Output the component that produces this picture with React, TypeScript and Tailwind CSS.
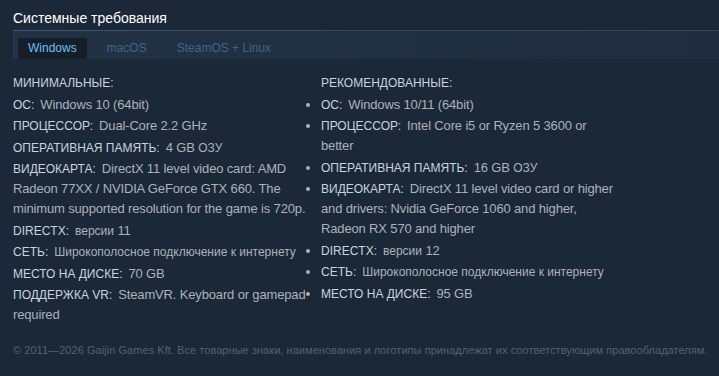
const minReqs: [string, string][] = [
  ["ОС:", "Windows 10 (64bit)"],
  ["Процессор:", "Dual-Core 2.2 GHz"],
  ["Оперативная память:", "4 GB ОЗУ"],
  ["Видеокарта:", "DirectX 11 level video card: AMD Radeon 77XX / NVIDIA GeForce GTX 660. The minimum supported resolution for the game is 720p."],
  ["DirectX:", "версии 11"],
  ["Сеть:", "Широкополосное подключение к интернету"],
  ["Место на диске:", "70 GB"],
  ["Поддержка VR:", "SteamVR. Keyboard or gamepad required"],
];

const recReqs: [string, string][] = [
  ["ОС:", "Windows 10/11 (64bit)"],
  ["Процессор:", "Intel Core i5 or Ryzen 5 3600 or better"],
  ["Оперативная память:", "16 GB ОЗУ"],
  ["Видеокарта:", "DirectX 11 level video card or higher and drivers: Nvidia GeForce 1060 and higher, Radeon RX 570 and higher"],
  ["DirectX:", "версии 12"],
  ["Сеть:", "Широкополосное подключение к интернету"],
  ["Место на диске:", "95 GB"],
];

// cyrillic runs are set a bit smaller, the original font is narrower there
function Mixed({ text }: { text: string }) {
  const parts = text.split(/([А-Яа-яЁё]+(?:\s+[А-Яа-яЁё]+)*)/);
  return (
    <>
      {parts.map((p, i) =>
        /[А-Яа-яЁё]/.test(p) ? (
          <span key={i} className="text-[12px] tracking-normal">{p}</span>
        ) : (
          p
        )
      )}
    </>
  );
}

function ReqList({ title, items, bullets }: { title: string; items: [string, string][]; bullets?: boolean }) {
  return (
    <div>
      <div className="uppercase text-[#c6d4df] text-[12px] leading-[20px] mb-[1.5px]">{title}</div>
      <ul className={bullets ? "list-disc list-outside pl-0" : "list-none"}>
        {items.map(([label, value]) => (
          <li key={label} className="leading-[20px] mb-[1.5px] marker:text-[#acb2b8]">
            <span className="uppercase text-[#c6d4df] text-[12px]">{label}</span>
            <span className="ml-[6px] tracking-[-0.15px]">
              <Mixed text={value} />
            </span>
          </li>
        ))}
      </ul>
    </div>
  );
}

export default function App() {
  return (
    <div className="w-[719px] h-[376px] bg-[#1b2838] font-['Liberation_Sans'] flex flex-col overflow-hidden">
      <div className="pl-[13px] pt-[9px]">
        <h2 className="text-[14px] leading-[18px] text-white pb-[3px]">Системные требования</h2>
        <div className="h-px bg-gradient-to-r from-[#3a5875] via-[#2e4a63] to-[#2b4660]" />
        <div className="h-[28px] pt-[7px] pl-[4px] flex gap-[10px] text-[12px] bg-gradient-to-r from-[#223245] to-[#1e2c3d] border-l border-[#2a3f55]">
          <div className="px-[10px] h-[21px] leading-[21px] bg-[#151e29] text-[#67c1f5]">Windows</div>
          <div className="px-[10px] h-[21px] leading-[21px] text-[#3d6789]">macOS</div>
          <div className="px-[10px] h-[21px] leading-[21px] text-[#3d6789]">SteamOS + Linux</div>
        </div>
        <div className="grid grid-cols-[300px_300px] gap-x-[8px] mt-[14px] text-[13px] text-[#acb2b8]">
          <ReqList title="Минимальные:" items={minReqs} />
          <ReqList title="Рекомендованные:" items={recReqs} bullets />
        </div>
      </div>
      <div className="mt-auto pl-[13px] pb-[19px] text-[11px] leading-[14px] tracking-[0.05px] text-[#56626e] whitespace-nowrap">
        © 2011—2026 Gaijin Games Kft. Все товарные знаки, наименования и логотипы принадлежат их соответствующим правообладателям.
      </div>
    </div>
  );
}
